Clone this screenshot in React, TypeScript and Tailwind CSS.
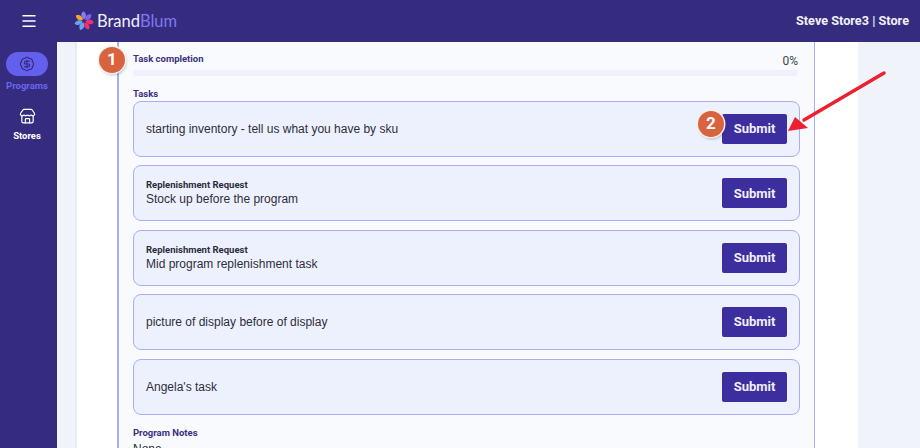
import { Menu, Store, BadgeDollarSign } from "lucide-react";

const tasks = [
  { label: "", title: "starting inventory - tell us what you have by sku" },
  { label: "Replenishment Request", title: "Stock up before the program" },
  { label: "Replenishment Request", title: "Mid program replenishment task" },
  { label: "", title: "picture of display before of display" },
  { label: "", title: "Angela's task" },
];

function Logo() {
  const petals = [
    ["#8b78f2", 0], ["#7a62ee", 51], ["#f0306a", 103], ["#f0306a", 154], ["#6aa0f0", 206], ["#6aa0f0", 257], ["#f5a623", 309],
  ] as const;
  return (
    <svg width="20" height="20" viewBox="-10 -10 20 20" className="shrink-0">
      {petals.map(([c, r], i) => (
        <path key={i} d="M0 -1.5 C-3.6 -4 -3.4 -8 -0.5 -9.8 C2.4 -8 3 -4 0 -1.5Z" fill={c} transform={`rotate(${r})`} />
      ))}
    </svg>
  );
}

function Badge({ n, className }: { n: number; className: string }) {
  return (
    <div className={`absolute flex h-[26px] w-[26px] items-center justify-center rounded-full bg-[#d9623f] text-[17px] font-bold text-white shadow-[0_0_0_1.5px_#f4f1ec,1px_2px_3px_rgba(0,0,0,0.3)] ${className}`}>
      {n}
    </div>
  );
}

export default function App() {
  return (
    <div className="relative flex h-[448px] w-[920px] flex-col overflow-hidden bg-[#f0f3fa] font-['Roboto','Liberation_Sans',sans-serif] text-[#2c2c3a]">
      <header className="flex h-[42px] shrink-0 items-center bg-[#352c80] text-white">
        <div className="flex w-[57px] justify-center">
          <Menu size={18} strokeWidth={2} />
        </div>
        <div className="ml-[17px] flex items-center gap-[3px]">
          <Logo />
          <span className="font-['Lato',sans-serif] text-[16.5px] leading-none text-[#f2f1fb]">
            Brand<span className="text-[#7f79ee]">Blum</span>
          </span>
        </div>
        <div className="ml-auto pr-[11px] text-[12.7px] font-bold text-[#f0effa]">Steve Store3 | Store</div>
      </header>
      <div className="flex min-h-0 flex-1">
        <nav className="flex w-[57px] shrink-0 flex-col items-center bg-[#352c80] pr-[3px] pt-[10px]">
          <div className="flex h-6 w-[42px] items-center justify-center rounded-full bg-[#6360ee] text-[#2f2878]">
            <BadgeDollarSign size={16} strokeWidth={1.6} />
          </div>
          <div className="mt-[3px] text-[9.5px] font-bold leading-[14px] text-[#6a66ef]">Programs</div>
          <div className="mt-[15px] text-white"><Store size={17} strokeWidth={1.7} /></div>
          <div className="mt-[4px] text-[9.5px] font-bold leading-[14px] text-white">Stores</div>
        </nav>
        <main className="min-w-0 flex-1 pl-[18px] pr-[62px]">
          <div className="h-full border-l-2 border-[#e9ecf5] bg-white pl-[40px] pr-[43px]">
            <div className="h-[500px] border-l-2 border-r border-[#a9aef5] bg-[#f9fafe] pl-[14px] pr-[14px] pt-[11px]">
              <div className="flex items-start justify-between">
                <div className="text-[9.5px] font-bold leading-[12px] text-[#3a3180]">Task completion</div>
                <div className="mt-[1px] pr-[2px] text-[12px] leading-[14px] text-[#444]">0%</div>
              </div>
              <div className="mt-[2px] h-[6px] w-[665px] rounded-full bg-[#eef1fc]" />
              <div className="mt-[12px] text-[9.5px] font-bold leading-[12px] text-[#3a3180]">Tasks</div>
              <div className="mt-[1px] flex flex-col gap-[8.4px]">
                {tasks.map((t, i) => (
                  <div key={i} className="flex h-[56px] items-center justify-between rounded-[8px] border border-[#a9aef5] bg-[#edf1fe] pl-[12px] pr-[12px]">
                    <div>
                      {t.label && <div className="text-[9.5px] font-bold leading-[12px] text-[#2c2c3a]">{t.label}</div>}
                      <div className="font-['Liberation_Sans',sans-serif] text-[12px] leading-[16px] text-[#2e2e3a]">{t.title}</div>
                    </div>
                    <button className="h-[30px] w-[65px] rounded-[2px] bg-[#3d2ea0] text-[13px] font-bold text-[#f0effa]">Submit</button>
                  </div>
                ))}
              </div>
              <div className="mt-[12px] text-[9.5px] font-bold leading-[12px] text-[#3a3180]">Program Notes</div>
              <div className="mt-[3px] font-['Liberation_Sans',sans-serif] text-[12px] leading-[14px] text-[#2e2e3a]">None</div>
            </div>
          </div>
        </main>
      </div>
      <Badge n={1} className="left-[99px] top-[47px]" />
      <Badge n={2} className="left-[698px] top-[111px]" />
      <svg className="absolute left-[780px] top-[65px]" width="110" height="75" viewBox="0 0 110 75">
        <line x1="104" y1="8" x2="24" y2="55" stroke="#ee2030" strokeWidth="3.5" strokeLinecap="round" />
        <polygon points="8,66 15,52 28,63" fill="#ee2030" />
      </svg>
    </div>
  );
}
